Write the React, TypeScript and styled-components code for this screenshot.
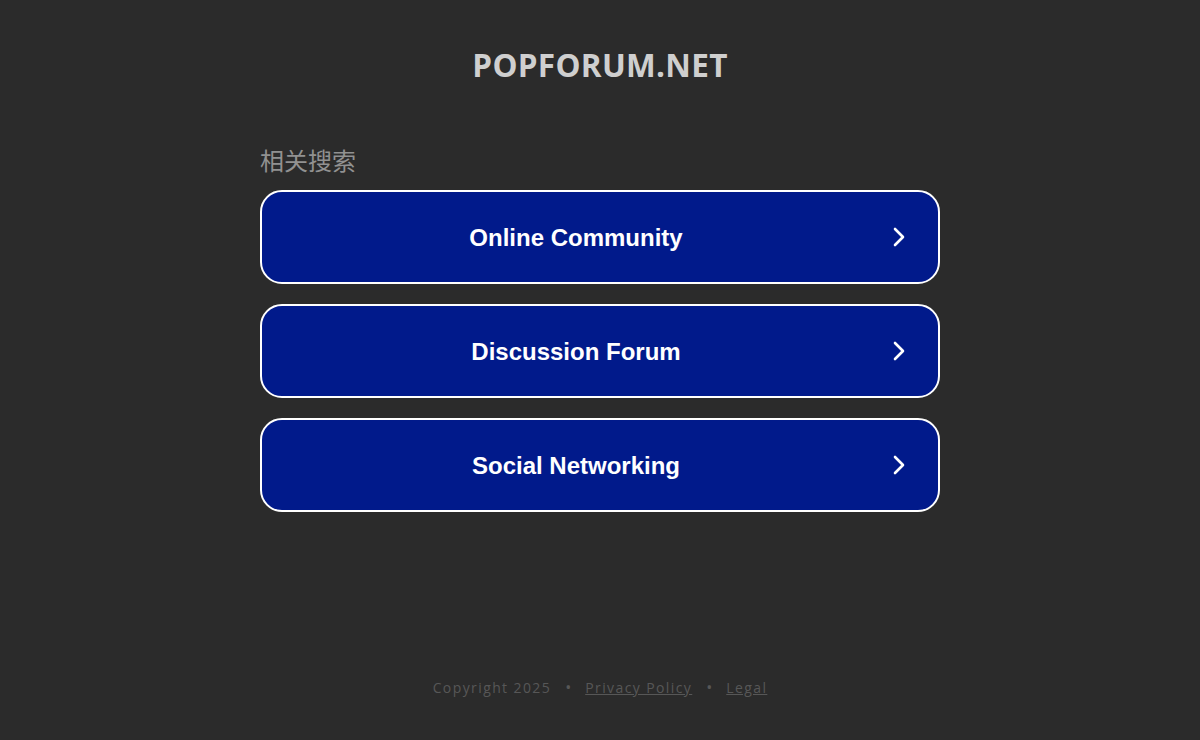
import React from "react";
import styled, { createGlobalStyle } from "styled-components";

const GlobalStyle = createGlobalStyle`
  html, body {
    margin: 0;
    padding: 0;
    background: #2b2b2b;
  }
`;

const Page = styled.div`
  min-height: 740px;
  display: flex;
  flex-direction: column;
  align-items: center;
  font-family: "Open Sans", "Liberation Sans", sans-serif;
`;

const SiteTitle = styled.h1`
  margin: 44px 0 0;
  font-size: 31.5px;
  line-height: 42px;
  font-weight: 700;
  color: #cfcfcf;
  letter-spacing: 0.3px;
`;

const Searches = styled.section`
  width: 680px;
  margin-top: 58px;
  display: flex;
  flex-direction: column;
  gap: 20px;
`;

const Heading = styled.h2`
  margin: 0 0 -6px;
  font-family: "Noto Sans CJK SC", sans-serif;
  font-size: 24px;
  line-height: 32px;
  font-weight: 400;
  color: #919191;
`;

const Result = styled.a`
  position: relative;
  height: 94px;
  display: flex;
  align-items: center;
  justify-content: center;
  box-sizing: border-box;
  padding: 2px 48px 0 0;
  background: #011a8b;
  border: 2px solid #ffffff;
  border-radius: 22px;
  color: #ffffff;
  font-family: "Liberation Sans", Arial, sans-serif;
  font-size: 24px;
  font-weight: 700;
  text-decoration: none;
`;

const Chevron = styled.svg`
  position: absolute;
  right: 28px;
  top: 50%;
  margin-top: -11px;
`;

const Footer = styled.footer`
  margin-top: auto;
  margin-bottom: 42px;
  display: flex;
  align-items: center;
  gap: 14px;
  font-size: 14px;
  letter-spacing: 1.4px;
  color: #575757;
`;

const Dot = styled.span`
  font-size: 16px;
  letter-spacing: 0;
`;

const FooterLink = styled.a`
  color: #575757;
  text-decoration: underline;
`;

const items = ["Online Community", "Discussion Forum", "Social Networking"];

export default function App() {
  return (
    <Page>
      <GlobalStyle />
      <SiteTitle>POPFORUM.NET</SiteTitle>
      <Searches>
        <Heading>相关搜索</Heading>
        {items.map((label) => (
          <Result key={label} href="#">
            {label}
            <Chevron width="22" height="22" viewBox="0 0 22 22" fill="none">
              <path d="M7 3l8 8-8 8" stroke="#fff" strokeWidth="2.6" strokeLinecap="round" strokeLinejoin="round" />
            </Chevron>
          </Result>
        ))}
      </Searches>
      <Footer>
        <span>Copyright 2025</span>
        <Dot>•</Dot>
        <FooterLink href="#">Privacy Policy</FooterLink>
        <Dot>•</Dot>
        <FooterLink href="#">Legal</FooterLink>
      </Footer>
    </Page>
  );
}
